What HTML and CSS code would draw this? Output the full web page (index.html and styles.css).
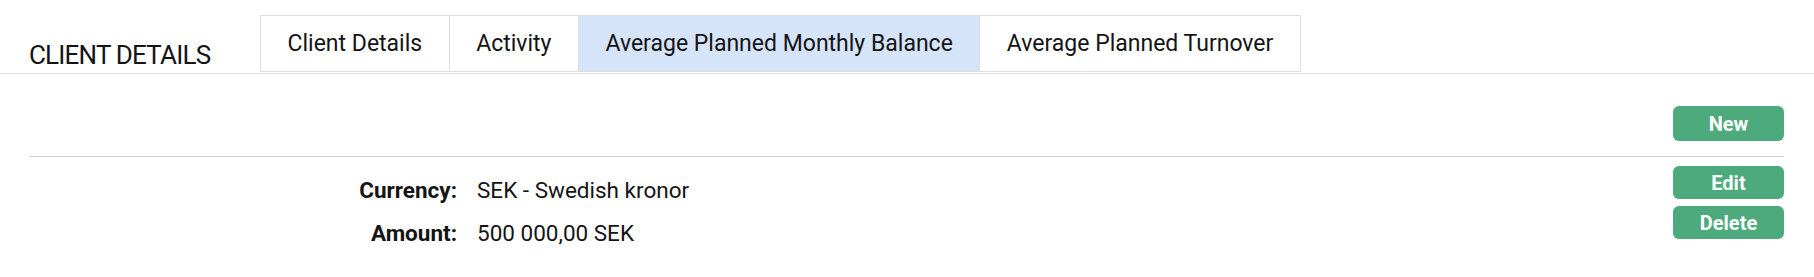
FILE: index.html
```html
<!DOCTYPE html>
<html lang="en">
<head>
<meta charset="utf-8">
<title>Client Details</title>
<link rel="stylesheet" href="styles.css">
</head>
<body>
  <header class="page-header">
    <h1 class="page-title">CLIENT DETAILS</h1>
    <nav class="tabs">
      <a class="tab">Client Details</a>
      <a class="tab">Activity</a>
      <a class="tab tab-active">Average Planned Monthly Balance</a>
      <a class="tab">Average Planned Turnover</a>
    </nav>
  </header>
  <main class="content">
    <div class="toolbar">
      <button class="btn btn-new">New</button>
    </div>
    <section class="record">
      <dl class="details">
        <dt class="label">Currency:</dt>
        <dd class="value">SEK - Swedish kronor</dd>
        <dt class="label">Amount:</dt>
        <dd class="value">500 000,00&nbsp;SEK</dd>
      </dl>
      <div class="actions">
        <button class="btn btn-row">Edit</button>
        <button class="btn btn-row">Delete</button>
      </div>
    </section>
  </main>
</body>
</html>
```

FILE: styles.css
```css
* {
  box-sizing: border-box;
}

body {
  margin: 0;
  background: #ffffff;
  color: #141414;
  font-family: Roboto, "Liberation Sans", Arial, sans-serif;
}

.page-header {
  display: flex;
  align-items: flex-end;
  padding: 15px 0 0 29px;
  border-bottom: 1px solid #dedede;
}

.page-title {
  width: 231px;
  margin: 0;
  padding-bottom: 6px;
  font-size: 26px;
  line-height: 24px;
  font-weight: 400;
  letter-spacing: -0.8px;
}

.tabs {
  display: flex;
  margin-bottom: 1px;
  border: 1px solid #dedede;
}

.tab {
  display: block;
  padding: 0 26.5px;
  line-height: 55px;
  font-size: 23px;
  color: #141414;
  border-left: 1px solid #dedede;
  white-space: nowrap;
}

.tab:first-child {
  border-left: 0;
}

.tab-active {
  background: #d6e4fa;
}

.content {
  padding: 0 30px;
}

.toolbar {
  display: flex;
  justify-content: flex-end;
  padding: 32px 0 15px;
  border-bottom: 1px solid #cfcfcf;
}

.btn {
  width: 111px;
  border: 0;
  border-radius: 6px;
  background: #4caa7c;
  color: #ffffff;
  font-family: Roboto, "Liberation Sans", Arial, sans-serif;
  font-weight: 700;
  font-size: 20px;
  padding: 0;
}

.btn-new {
  height: 35px;
}

.btn-row {
  height: 33px;
}

.record {
  display: flex;
  align-items: flex-start;
}

.details {
  flex: 1;
  display: grid;
  grid-template-columns: 427px auto;
  column-gap: 20px;
  margin: 12px 0 0;
  font-size: 22.5px;
  line-height: 43px;
}

.label {
  text-align: right;
  font-weight: 700;
}

.value {
  margin: 0;
}

.actions {
  display: flex;
  flex-direction: column;
  gap: 7px;
  margin-top: 9px;
}
```
